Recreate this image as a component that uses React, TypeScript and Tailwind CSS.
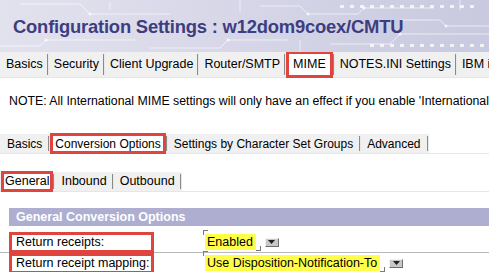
import React from 'react';

type Tab = { label: string; boxed?: string };

const topTabs: Tab[] = [
  { label: 'Basics' },
  { label: 'Security' },
  { label: 'Client Upgrade' },
  { label: 'Router/SMTP' },
  { label: 'MIME', boxed: 'px-[4px]' },
  { label: 'NOTES.INI Settings' },
  { label: 'IBM i Settings' },
];

const mimeTabs: Tab[] = [
  { label: 'Basics' },
  { label: 'Conversion Options', boxed: 'px-[2px]' },
  { label: 'Settings by Character Set Groups' },
  { label: 'Advanced' },
];

const convTabs: Tab[] = [
  { label: 'General', boxed: 'px-[1px]' },
  { label: 'Inbound' },
  { label: 'Outbound' },
];

const Separator = () => (
  <span className="w-[2px] self-stretch my-[2px] border-l border-[#8a8a8a] border-r border-r-[#e8e8e8]" />
);

const TabRow = ({ tabs, height, pad = 'pl-[5px] pr-[4px]' }: { tabs: Tab[]; height: string; pad?: string }) => (
  <div className={`flex items-stretch border-b border-[#e6e6e6] ${height}`}>
    <div className="flex items-stretch bg-[#f0f0f0] pl-[1px]">
      {tabs.map((t) => (
        <React.Fragment key={t.label}>
          {t.boxed ? (
            <span className={`flex items-center border-[3px] border-[#e0443e] bg-white -my-[1px] whitespace-nowrap ${t.boxed}`}>
              {t.label}
            </span>
          ) : (
            <span className={`flex items-center whitespace-nowrap ${pad}`}>{t.label}</span>
          )}
          <Separator />
        </React.Fragment>
      ))}
    </div>
  </div>
);

const DropButton = () => (
  <span className="ml-[5px] flex h-[9px] w-[14px] items-center justify-center bg-[#c8c8c8] border border-t-[#f4f4f4] border-l-[#f4f4f4] border-b-[#6e6e6e] border-r-[#6e6e6e]">
    <svg width="7" height="4" viewBox="0 0 7 4">
      <path d="M0 0h7L3.5 4z" fill="#202020" />
    </svg>
  </span>
);

const Field = ({ value }: { value: string }) => (
  <div className="flex items-center">
    <span className="relative flex items-center">
      <span className="absolute left-[-2px] top-[-4px] h-[5px] w-[5px] border-l border-t border-[#7a7a7a]" />
      <span className="bg-[#ffff4a] pl-[2px] pr-[3px] leading-[16px] whitespace-nowrap">{value}</span>
      <span className="absolute right-[-5px] bottom-[-1px] h-[5px] w-[5px] border-r border-b border-[#7a7a7a]" />
    </span>
    <span className="w-[4px]" />
    <DropButton />
  </div>
);

const Row = ({ label, value }: { label: string; value: string }) => (
  <div className="flex h-[21px] items-stretch border-b border-[#b8b8b8]">
    <div className="ml-[9px] flex w-[145px] shrink-0 items-center whitespace-nowrap border-[3px] border-[#e0443e] pl-[4px] -mb-[1px]">
      {label}
    </div>
    <div className="flex flex-1 items-center pl-[51px]">
      <Field value={value} />
    </div>
  </div>
);

export default function App() {
  return (
    <div
      className="h-[272px] w-[489px] overflow-hidden bg-white text-[12.5px] text-black"
      style={{ fontFamily: '"Liberation Sans", Arial, sans-serif' }}
    >
      <div className="relative h-[52px] bg-gradient-to-r from-[#e2e2ee] via-[#d6d6e8] to-[#c9c9df]">
        <svg className="absolute inset-0" width="489" height="52" viewBox="0 0 489 52">
          <g stroke="#ffffff" strokeOpacity="0.6" fill="none" strokeWidth="1">
            <path d="M20 4h60l10 10h80" />
            <path d="M0 46h40l6-6h90" />
            <path d="M150 48h70l8-8h60" />
            <path d="M260 6h40l8 8h50l6-6h70" />
            <path d="M330 44h60l10-10h89" />
            <path d="M400 20h40l6 6h43" />
            <path d="M110 2v8M240 0v12M300 40v12M460 0v10" />
          </g>
          <g fill="#ffffff" fillOpacity="0.75">
            <circle cx="90" cy="14" r="1.5" />
            <circle cx="46" cy="40" r="1.5" />
            <circle cx="228" cy="40" r="1.5" />
            <circle cx="308" cy="14" r="1.5" />
            <circle cx="364" cy="8" r="1.5" />
            <circle cx="400" cy="34" r="1.5" />
            <circle cx="446" cy="26" r="1.5" />
            {Array.from({ length: 14 }).map((_, i) => (
              <rect key={i} x={340 + i * 10} y={5} width="4" height="3" />
            ))}
            {Array.from({ length: 12 }).map((_, i) => (
              <rect key={`b${i}`} x={370 + i * 10} y={44} width="4" height="3" />
            ))}
          </g>
        </svg>
        <h1 className="relative whitespace-nowrap pl-[13px] pt-[17px] text-[18.4px] font-bold leading-[20px] tracking-[-0.2px] text-[#3d3d80]">
          Configuration Settings : w12dom9coex/CMTU
        </h1>
      </div>

      <TabRow tabs={topTabs} height="h-[26px]" />

      <div className="flex h-[47px] items-center whitespace-nowrap pl-[9px] pb-[1px] text-[12.3px]">
        NOTE: All International MIME settings will only have an effect if you enable 'International MIME settings'
      </div>

      <div className="pt-[9px] text-[12px]">
        <TabRow tabs={mimeTabs} height="h-[20px]" pad="pl-[6px] pr-[6px]" />
      </div>

      <div className="pt-[18px]">
        <TabRow tabs={convTabs} height="h-[20px]" pad="pl-[6px] pr-[5px]" />
      </div>

      <div className="ml-[9px] mt-[16px] flex h-[18px] items-center bg-[#aeaed0] pl-[7px] font-bold text-white">
        General Conversion Options
      </div>

      <div className="pt-[6px]">
        <Row label="Return receipts:" value="Enabled" />
        <Row label="Return receipt mapping:" value="Use Disposition-Notification-To" />
      </div>
    </div>
  );
}
